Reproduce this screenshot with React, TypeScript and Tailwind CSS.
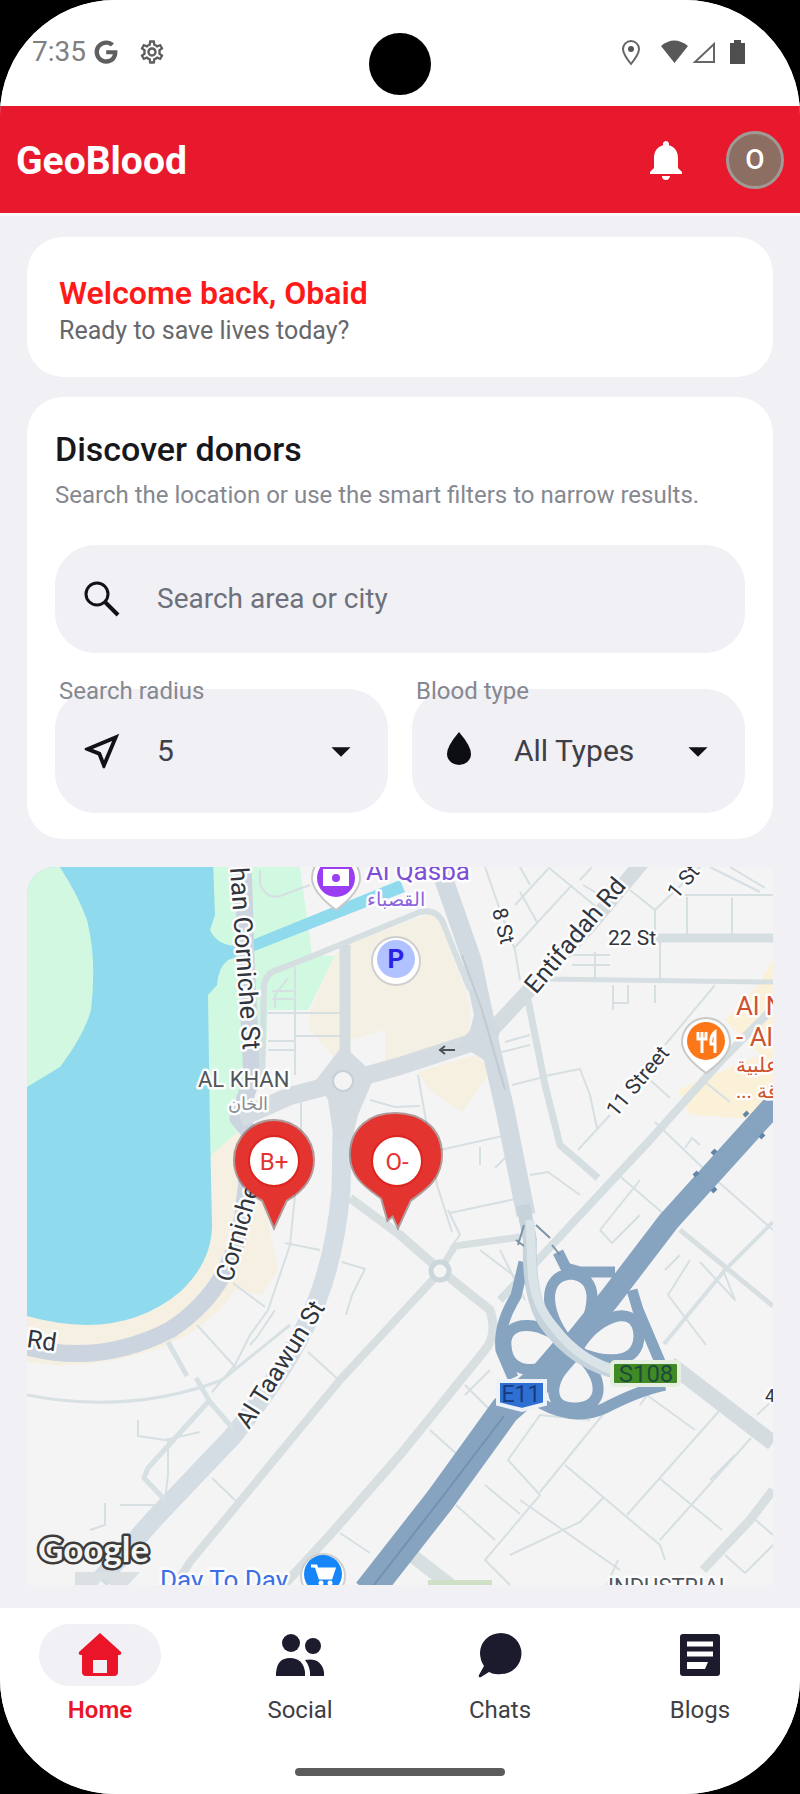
import type { ReactNode } from "react";
import { FaGoogle } from "react-icons/fa";
import {
    MdArrowDropDown,
    MdNotifications,
    MdOutlineNearMe,
    MdOutlineSettings,
} from "react-icons/md";

const greyRoads = [
    // big streets
    { d: "M243 860 L246 960 L252 1078 L238 1118 L252 1135 L243 1215 Q232 1290 170 1330 Q100 1366 27 1347", w: 17, c: "#cbd4df" },
    { d: "M343 1084 L341 1190 Q334 1270 306 1325 Q282 1375 232 1437 L155 1518 L100 1580", w: 19, c: "#d4dce4" },
    { d: "M240 1118 L290 1096 L343 1082 L400 1066 L480 1040", w: 18, c: "#d4dce2" },
    { d: "M437 860 L472 960 L489 1040 L505 1110 L526 1215", w: 19, c: "#d2dae1" },
    { d: "M644 860 L590 925 L492 1030", w: 15, c: "#d4dce0" },
    { d: "M670 1364 L773 1443", w: 16, c: "#d4dce0" },
    { d: "M345 945 L345 1082", w: 11, c: "#d4dce0" },
    { d: "M262 1075 L264 985 Q266 972 280 969 L320 953 L420 912 Q438 908 444 925 L470 990", w: 6, c: "#d5dee1" },
    { d: "M773 1008 L720 1062 L650 1140 L540 1258 L500 1300", w: 8, c: "#d5dee1" },
    { d: "M655 938 H773", w: 9, c: "#d5dee1" },
    { d: "M545 979 L773 982", w: 5, c: "#d5dee1" },
    { d: "M528 1000 L545 1085 L560 1145 L598 1178", w: 7, c: "#d5dee1" },
    { d: "M350 1198 L400 1235 L440 1270 L490 1310 Q498 1335 485 1350 L400 1455 L330 1535 L270 1600", w: 9, c: "#d7dfe1" },
    { d: "M440 1272 L340 1380 L190 1562 L175 1585", w: 8, c: "#d7dfe1" },
    { d: "M440 1270 L455 1246 L520 1237", w: 7, c: "#d7dfe1" },
    { d: "M680 1230 L773 1306", w: 5, c: "#d7dfe1" },
    { d: "M773 1490 L750 1520 L703 1570", w: 9, c: "#d7dfe1" },
    { d: "M405 1550 L450 1585", w: 14, c: "#d7dfe1" },
    { d: "M27 1395 Q130 1415 222 1380 L290 1325", w: 3, c: "#d7e0e3" },
    { d: "M168 1342 L187 1376 M196 1378 L210 1402 L234 1430", w: 5, c: "#d7e0e3" },
    { d: "M208 1402 L148 1468 L144 1478 L165 1500", w: 5, c: "#d7e0e3" },
    { d: "M664 1344 L725 1270 L773 1222", w: 4, c: "#d7e0e3" },
];

const thinRoads = [
    "M295 967 V1075 M268 1013 H340 M295 1036 H340 M268 1041 H295 M268 1050 H295",
    "M275 1008 V995 L288 978 M272 991 H293 M272 999 H293",
    "M260 870 V885 Q268 900 280 896 L310 885",
    "M485 867 L500 910 L515 950 L520 980 M515 947 L572 885 M520 892 L537 922 M548 867 L600 910 M548 869 L515 905",
    "M520 867 L530 885 M580 880 L592 867 M583 885 L605 898",
    "M630 890 L655 910 V940 M655 910 L700 867 M660 937 V980",
    "M685 895 H773 M687 897 V935 M732 898 V935 M710 867 L760 892 M730 867 L765 888",
    "M613 985 V1010 M628 985 V1003 H613 M655 985 V1003",
    "M568 955 H610 M572 965 H610 M595 952 V980",
    "M545 1076 L580 1069 L590 1095 L597 1128 M512 1085 L540 1078",
    "M715 985 L665 1045 M610 1115 L578 1150",
    "M505 1042 L530 1035 M502 1052 L530 1045",
    "M418 1075 L425 1115 L437 1185 L452 1232 M440 1150 L507 1135 M450 1213 L520 1198",
    "M480 1147 V1165 M495 1168 L508 1155 M530 1175 L548 1172 L580 1195",
    "M655 1122 L705 1170 L773 1230 M615 1172 L665 1215 M650 1080 L670 1098 M700 1078 L730 1102",
    "M700 1145 L692 1138 L685 1148",
    "M301 1098 V1140 M370 1100 L395 1107 L420 1106",
    "M450 1248 L460 1235 L448 1210 M480 1250 L530 1288 M500 1250 L525 1300",
    "M297 1175 L290 1245 L268 1310 L250 1335 L235 1365 L212 1392 M250 1345 L257 1337 L275 1310",
    "M233 1283 L265 1307 M197 1325 L236 1368 M285 1243 L320 1250",
    "M342 1262 L365 1269 L352 1295 L346 1315",
    "M308 1352 L342 1383 M212 1478 L240 1505",
    "M138 1420 V1436 L165 1440 L200 1432 M168 1438 V1475 L165 1500 L158 1505 H120 M105 1503 V1525 L90 1530",
    "M600 1230 L640 1180 M600 1230 L612 1243 L640 1215 M690 1260 L668 1295 L706 1345",
    "M700 1262 L735 1300 L723 1270 M680 1255 L665 1270",
    "M430 1430 L460 1457 M490 1370 L465 1395 M465 1385 L490 1410",
    "M590 1420 L540 1415 L508 1460 L540 1495 L485 1560 L510 1585",
    "M605 1412 L562 1465 L540 1492 M565 1465 L660 1545 L665 1560 M603 1498 L580 1522 L510 1555",
    "M485 1485 L520 1514 M456 1505 L495 1540 M520 1500 L620 1570 M640 1390 L695 1430",
    "M720 1410 L627 1515 M659 1478 L722 1530 M751 1438 L660 1540 M655 1385 L640 1405",
    "M750 1515 L773 1535 M725 1555 L745 1573 L773 1545 M710 1480 L735 1455 M757 1415 L773 1400",
    "M340 1533 L370 1553 M600 1600 L618 1560",
];

const blueRamps = [
    "M572 1346 C545 1318 540 1277 570 1274 C602 1276 596 1315 572 1346",
    "M572 1350 C545 1318 503 1318 506 1346 C508 1378 545 1374 568 1354",
    "M576 1352 C592 1318 636 1300 639 1334 C640 1368 602 1362 578 1352",
    "M574 1356 C545 1382 548 1410 577 1408 C606 1406 604 1376 578 1354",
    "M558 1252 L566 1268 L580 1272 H615",
    "M632 1290 L638 1310 L660 1362",
    "M524 1262 L516 1296 Q498 1325 501 1350 L513 1378",
    "M540 1403 Q575 1422 605 1408 Q640 1390 665 1385",
];

const donors = [
    {
        type: "B+",
        x: 274,
        shape: "M235 1160 A39 39 0 1 1 313 1160 C313 1180 300 1192 286 1200 L274 1226 L263 1200 C248 1192 235 1180 235 1160 Z",
    },
    {
        type: "O-",
        x: 397,
        shape: "M351 1155 C351 1127 372 1114 395 1114 C420 1114 441 1128 441 1155 C441 1180 423 1190 410 1200 L398 1226 L393 1215 L388 1219 L382 1198 C366 1186 351 1177 351 1155 Z",
    },
];

const tabs = [
    { label: "Home", icon: <HomeIcon /> },
    { label: "Social", icon: <PeopleIcon /> },
    { label: "Chats", icon: <ChatIcon /> },
    { label: "Blogs", icon: <ArticleIcon /> },
];

function HomeIcon() {
    return (
        <svg viewBox="0 0 46 46" className="size-[46px]" fill="#ea1528">
            <path
                fillRule="evenodd"
                d="M23 1 L44 20 Q45 23 42 23 H41 V40 Q41 44 37 44 H9 Q5 44 5 40 V23 H4 Q1 23 2 20 Z M16 28 V41 H30 V28 Z"
            />
        </svg>
    );
}

function PeopleIcon() {
    return (
        <svg viewBox="0 0 50 46" className="h-[46px] w-[50px]" fill="#1c1b2e">
            <circle cx="16" cy="11" r="9" />
            <circle cx="38" cy="14" r="8" />
            <path d="M1 44 V41 Q2 26 15 26 Q28 26 30 40 V44 Z" />
            <path d="M30 28 Q46 25 49 40 V44 H35 V40 Q34 33 30 28 Z" />
        </svg>
    );
}

function ChatIcon() {
    return (
        <svg viewBox="0 0 46 46" className="size-[46px]" fill="#1c1b2e">
            <path d="M24 1 A20 20 0 0 1 24 42 Q17 43 12 40 L4 45 Q1 46 2 43 L7 34 Q3 28 3 21 A21 20 0 0 1 24 1 Z" />
        </svg>
    );
}

function ArticleIcon() {
    return (
        <svg viewBox="0 0 46 46" className="size-[46px]">
            <rect x="3" y="2" width="40" height="42" rx="3" fill="#1c1b2e" />
            <path d="M10 12 H36 M10 22 H36" stroke="white" strokeWidth="5" />
            <path d="M10 30 H31 L28 37 H10 Z" fill="white" />
        </svg>
    );
}

function StatusBar() {
    return (
        <div className="relative flex h-[106px] items-start justify-between bg-white pt-10 pr-[54px] pl-8">
            <div className="flex h-6 items-center gap-2 text-[#5f5f5f]">
                <span className="text-[28px] leading-6 text-[#808080]">7:35</span>
                <FaGoogle className="size-6" />
                <MdOutlineSettings className="ml-3 size-7" />
            </div>
            <div className="absolute top-[33px] left-1/2 size-[62px] -translate-x-1/2 rounded-full bg-black" />
            <svg viewBox="0 0 126 26" className="h-[26px] w-[126px]">
                <path d="M11 24 Q3 14 3 9 A8 8 0 0 1 19 9 Q19 14 11 24 Z" fill="none" stroke="#666" strokeWidth="2" />
                <circle cx="11" cy="9" r="3" fill="#555" />
                <path d="M41 6 Q54 -5 68 6 L54.500 23 Z" fill="#585858" />
                <path d="M75 22 H94 V4 Z" fill="none" stroke="#666" strokeWidth="2" />
                <path d="M110 3 H114 V0 H121 V3 H125 V24 H110 Z" fill="#4e4e4e" />
            </svg>
        </div>
    );
}

function AppHeader() {
    return (
        <header className="flex h-[107px] items-center justify-between bg-[#e8192c] px-4">
            <h1 className="pt-1 text-[39px] font-bold text-white">GeoBlood</h1>
            <div className="flex items-center gap-9">
                <button aria-label="Notifications">
                    <MdNotifications className="size-12 text-white" />
                </button>
                <button className="size-[58px] rounded-full border-3 border-[#a09a96] bg-[#8d6e63] text-[28px] font-medium text-white">
                    O
                </button>
            </div>
        </header>
    );
}

type FilterProps = { id: string; label: string; icon: ReactNode; options: string[] };

function Filter({ id, label, icon, options }: FilterProps) {
    return (
        <div className="flex flex-1 flex-col">
            <label htmlFor={id} className="z-10 -mb-4 pl-1 text-2xl leading-7 text-[#85888f]">
                {label}
            </label>
            <div className="flex h-31 items-center rounded-[40px] bg-[#f0f0f5] px-6">
                {icon}
                <select id={id} className="ml-8 min-w-0 flex-1 appearance-none text-3xl text-[#3f4047] outline-none">
                    {options.map((option) => (
                        <option key={option}>{option}</option>
                    ))}
                </select>
                <MdArrowDropDown className="pointer-events-none size-[46px] text-[#111118]" />
            </div>
        </div>
    );
}

function Pin({ type, x, shape }: { type: string; x: number; shape: string }) {
    return (
        <g>
            <path d={shape} fill="#e3342f" stroke="#6b4040" strokeOpacity="0.5" strokeWidth="4" paintOrder="stroke" />
            <circle cx={x} cy="1161" r="25" fill="white" stroke="#dc2420" strokeWidth="2" />
            <text x={x} y="1170" fontSize="24" textAnchor="middle" fill="#e3342f">
                {type}
            </text>
        </g>
    );
}

function DonorMap() {
    return (
        <svg
            viewBox="27 867 746 718"
            className="mt-2 w-full rounded-tl-[28px] bg-[#f5f4f5]"
            role="img"
            aria-label="Donor map"
        >
            {/* beach, park and water */}
            <path d="M200 1160 L245 1125 L262 1190 L278 1270 L262 1295 L235 1290 Q190 1360 60 1366 L27 1362 V1300 Z" fill="#f6f0e2" />
            <path d="M205 867 H300 L312 955 L335 956 L308 1010 H268 L265 1075 L240 1095 V1130 L205 1160 Z" fill="#d1f8e0" />
            <path d="M335 955 L346 945 L425 915 Q440 912 446 935 L470 1005 L470 1035 L450 1050 L385 1068 V1030 L350 1040 V1075 L310 1030 V1010 Z" fill="#f5f0e4" />
            <path d="M418 1072 L475 1055 Q487 1060 488 1075 L462 1112 L430 1090 Z" fill="#f6f0e0" />
            <path d="M773 960 L758 985 L725 1020 L760 1055 L678 1090 L690 1115 L773 1120 Z" fill="#fbf0d8" />
            <path d="M27 860 H213 L215 915 L210 930 Q218 947 240 946 L257 938 L400 880 L405 892 L257 950 L228 960 Q218 968 217 985 L208 995 L210 1130 L212 1225 Q212 1262 180 1292 Q120 1342 27 1316 Z" fill="#90daee" />
            <path d="M27 1087 L60 1067 Q84 1035 91 1010 Q97 960 87 920 Q76 890 55 860 H27 Z" fill="#d3f8e2" />

            <g fill="none" strokeLinejoin="round">
                {thinRoads.map((d) => (
                    <path key={d} d={d} stroke="#d6dfe2" strokeWidth="2" />
                ))}
                {greyRoads.map((road) => (
                    <path key={road.d} d={road.d} stroke={road.c} strokeWidth={road.w} />
                ))}
            </g>
            <path d="M316 1080 L343 1045 L375 1075 L358 1115 L352 1140 H334 L328 1100 Z" fill="#d4dce2" />
            <path d="M478 1000 L500 1030 L492 1065 L468 1050 L455 1048 L470 1030 Z" fill="#d2dae1" />
            <path d="M462 955 L482 1010 L505 1090" fill="none" stroke="#bfcad3" strokeWidth="2" />
            <path d="M455 1050 H440 M445 1046 L440 1050 L445 1054" fill="none" stroke="#4b5258" strokeWidth="2" />
            <circle cx="343" cy="1081" r="10" fill="#f5f4f5" stroke="#c5d0d8" strokeWidth="2" />
            <circle cx="440" cy="1271" r="9" fill="#f5f4f5" stroke="#ccd7dc" strokeWidth="5" />

            {/* E11 motorway and its interchange */}
            <g fill="none" stroke="#86a3c0">
                {blueRamps.map((d) => (
                    <path key={d} d={d} strokeWidth="11" />
                ))}
                <path d="M780 1098 L668 1222 L610 1298 L560 1360 L525 1395" strokeWidth="22" />
                <path d="M575 1340 L545 1375 L505 1410 L440 1500 L368 1592" strokeWidth="30" />
            </g>
            <path d="M504 1416 L440 1500 L370 1590" fill="none" stroke="#7391b2" strokeWidth="2" />
            <path d="M523 1205 L530 1240 Q528 1295 545 1322 Q575 1365 625 1374" fill="none" stroke="#c6d3da" strokeWidth="14" />
            <path d="M530 1220 L532 1270 Q534 1305 555 1328 Q580 1362 625 1374" fill="none" stroke="#dae4e8" strokeWidth="9" />
            <path d="M524 1225 L518 1245 M536 1225 L550 1238 M516 1240 L524 1246 M552 1245 L560 1255" stroke="#7c93a8" strokeWidth="2" />
            <path d="M744 1116 L748 1112 M712 1154 L716 1150 M694 1176 L698 1172 M712 1192 L716 1188 M760 1138 L764 1134" stroke="#6485aa" strokeWidth="4" />
            <path d="M75 1585 V1572 H140 L128 1585 H110 Q104 1572 98 1585 Z" fill="#dbe0e3" />
            <path d="M428 1580 H492 V1590 H428 Z" fill="#cfe0c6" />

            {/* street names */}
            <g
                fontSize="25"
                fill="#30353d"
                stroke="#fdfdfd"
                strokeWidth="5"
                strokeLinejoin="round"
                paintOrder="stroke"
            >
                <text transform="translate(230 868) rotate(86)" fontSize="26">han Corniche St</text>
                <text transform="translate(232 1283) rotate(-74)">Corniche</text>
                <text x="26" y="1347" transform="rotate(8 26 1347)">Rd</text>
                <text transform="translate(249 1430) rotate(-58)">Al Taawun St</text>
                <text transform="translate(536 995) rotate(-50)">Entifadah Rd</text>
                <g fontSize="21">
                    <text x="608" y="945">22 St</text>
                    <text transform="translate(492 910) rotate(76)">8 St</text>
                    <text transform="translate(677 900) rotate(-50)">1 St</text>
                    <text transform="translate(616 1118) rotate(-50)">11 Street</text>
                    <text x="765" y="1402" fontSize="18">4</text>
                </g>
                <g fontSize="22" fill="#50555c">
                    <text x="198" y="1087">AL KHAN</text>
                    <text x="608" y="1594">INDUSTRIAL</text>
                    <text x="228" y="1110" fontSize="18" fill="#888d94">الخان</text>
                </g>
                <text x="366" y="880" fontSize="26" fill="#7d4fd6">Al Qasba</text>
                <text x="367" y="906" fontSize="19" fill="#8d63dc">القصباء</text>
                <text x="160" y="1589" fontSize="26" fill="#3d6fe6">Day To Day</text>
                <g fontSize="26" fill="#d0522e">
                    <text x="736" y="1015">Al N</text>
                    <text x="736" y="1046">- Al</text>
                    <text x="736" y="1072" fontSize="20">علبية</text>
                    <text x="736" y="1098" fontSize="20">... رقة</text>
                </g>
            </g>

            {/* places */}
            <path d="M336 910 Q312 892 312 878 A24 24 0 0 1 360 878 Q360 892 336 910 Z" fill="white" stroke="#c9c9c9" strokeWidth="2" />
            <circle cx="336" cy="878" r="19" fill="#9b3df2" />
            <path d="M323 869 H349 V886 H323 Z" fill="white" />
            <circle cx="336" cy="878" r="4" fill="#9b3df2" />
            <circle cx="396" cy="961" r="24" fill="white" stroke="#cfcfcf" strokeWidth="2" />
            <circle cx="396" cy="959" r="19" fill="#b0c2ff" />
            <text x="396" y="968" fontSize="26" fontWeight="700" textAnchor="middle" fill="#2a22e8">P</text>
            <path d="M706 1073 Q682 1056 682 1042 A24 24 0 0 1 730 1042 Q730 1056 706 1073 Z" fill="white" stroke="#c9c9c9" strokeWidth="2" />
            <circle cx="706" cy="1041" r="19" fill="#fb7718" />
            <path d="M698 1032 V1039 H706 V1032 M702 1032 V1053 M715 1053 V1032 Q710 1036 711 1044 H715" fill="none" stroke="white" strokeWidth="3" />
            <circle cx="323" cy="1576" r="22" fill="white" stroke="#cfcfcf" strokeWidth="2" />
            <circle cx="323" cy="1574" r="19" fill="#1585f8" />
            <path d="M311 1566 H316 L320 1578 H331 L334 1569 H318" fill="white" stroke="white" strokeWidth="3" />
            <circle cx="321" cy="1583" r="2.500" fill="white" />
            <circle cx="330" cy="1583" r="2.500" fill="white" />

            {/* road shields */}
            <path d="M498 1381 H545 V1404 L522 1410 L498 1404 Z" fill="#2f6fd2" stroke="#edf1f8" strokeWidth="4" />
            <text x="521" y="1402" fontSize="23" textAnchor="middle" fill="#173a80">E11</text>
            <rect x="612" y="1362" width="67" height="23" rx="3" fill="#3f8a24" stroke="#e6efdf" strokeWidth="4" />
            <text x="646" y="1382" fontSize="24" textAnchor="middle" fill="#1f4a3a">S108</text>

            {donors.map((donor) => (
                <Pin key={donor.type} {...donor} />
            ))}

            <text
                x="38"
                y="1562"
                fontFamily="Lato, sans-serif"
                fontSize="35"
                fontWeight="700"
                fill="#f4f4f4"
                stroke="#3c3c3c"
                strokeWidth="5"
                strokeLinejoin="round"
                paintOrder="stroke"
            >
                Google
            </text>
        </svg>
    );
}

export default function App() {
    return (
        <div className="min-h-screen bg-black font-[Roboto,'Noto_Sans',sans-serif]">
            <div className="flex min-h-screen flex-col overflow-hidden rounded-[115px] bg-[#f0f0f5]">
                <StatusBar />
                <AppHeader />

                <main className="flex flex-1 flex-col gap-5 border-t-3 border-[#fafafc] px-[27px] pt-[21px] pb-[21px]">
                    <section className="rounded-[36px] bg-white px-8 pt-9 pb-7">
                        <h2 className="text-[32px] leading-10 font-semibold text-[#ff1a1a]">Welcome back, Obaid</h2>
                        <p className="text-[25px] leading-9 text-[#66676b]">Ready to save lives today?</p>
                    </section>

                    <section className="rounded-[36px] bg-white px-7 pt-8 pb-[26px]">
                        <h2 className="text-[34px] leading-10 font-medium text-[#17171c]">Discover donors</h2>
                        <p className="mt-3 text-2xl leading-7 text-[#85888f]">
                            Search the location or use the smart filters to narrow results.
                        </p>
                        <label className="mt-9 flex h-27 items-center rounded-[40px] bg-[#f0f0f5] px-6">
                            <svg viewBox="0 0 46 46" className="size-[46px]" fill="none" stroke="#111118" strokeWidth="3">
                                <circle cx="18" cy="18" r="11" />
                                <path d="M26 26 L39 39" strokeWidth="4" />
                            </svg>
                            <input
                                type="text"
                                aria-label="Search area or city"
                                placeholder="Search area or city"
                                className="ml-8 min-w-0 flex-1 text-[28px] outline-none placeholder:text-[#6e717b]"
                            />
                        </label>
                        <div className="mt-6 flex gap-6">
                            <Filter
                                id="radius"
                                label="Search radius"
                                icon={<MdOutlineNearMe className="size-[46px] text-[#111118]" />}
                                options={["5", "10", "25"]}
                            />
                            <Filter
                                id="blood"
                                label="Blood type"
                                icon={
                                    <svg viewBox="0 0 46 46" className="size-[46px]" fill="#0d0d14">
                                        <path d="M23 4 Q35 18 35 26 A12 11 0 0 1 11 26 Q11 18 23 4 Z" />
                                    </svg>
                                }
                                options={["All Types", "B+", "O-"]}
                            />
                        </div>
                    </section>

                    <DonorMap />
                </main>

                <nav className="grid grid-cols-4 bg-white pt-4">
                    {tabs.map((tab, i) => (
                        <a key={tab.label} href="#" className="flex flex-col items-center gap-2">
                            <span
                                className={
                                    i === 0
                                        ? "flex h-[62px] w-[122px] items-center justify-center rounded-full bg-[#f0f0f5]"
                                        : "flex h-[62px] w-[122px] items-center justify-center"
                                }
                            >
                                {tab.icon}
                            </span>
                            <span
                                className={
                                    i === 0
                                        ? "text-2xl leading-8 font-semibold text-[#ea1528]"
                                        : "text-2xl leading-8 text-[#3f3f45]"
                                }
                            >
                                {tab.label}
                            </span>
                        </a>
                    ))}
                </nav>
                <div className="flex justify-center bg-white pt-[42px] pb-[18px]">
                    <div className="h-2 w-[210px] rounded-full bg-[#5c5c5c]" />
                </div>
            </div>
        </div>
    );
}
